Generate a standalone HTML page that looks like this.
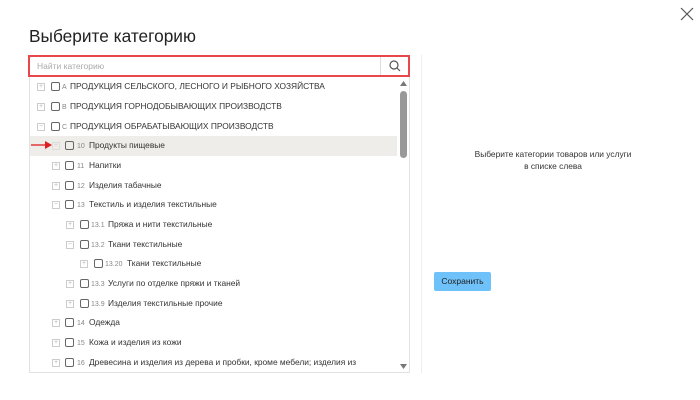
<!DOCTYPE html>
<html><head><meta charset="utf-8"><style>
*{margin:0;padding:0;box-sizing:border-box}
body{width:700px;height:400px;background:#fff;font-family:"Liberation Sans",sans-serif;position:relative;overflow:hidden;color:#333}
.abs{position:absolute}
h1{position:absolute;left:29px;top:26px;font-size:17.3px;font-weight:normal;color:#222}
.search{left:28px;top:55px;width:382px;height:22px;border:2px solid #e8474c}
.search span{position:absolute;left:7px;top:4px;font-size:8.5px;color:#aaa}
.search .btn{position:absolute;right:0;top:0;width:28px;height:18px;border-left:1px solid #ddd}
.tree{left:29px;top:77px;width:381px;height:296px;border:1px solid #e2e2e2;border-top:none}
.row{position:absolute;height:19px;font-size:8.4px;line-height:19px;white-space:nowrap}
.ex{position:absolute;width:8px;height:8px;border:1px solid #ccc;top:6px;font-size:7px;line-height:6px;text-align:center;color:#bbb}
.cb{position:absolute;width:9px;height:9px;border:1px solid #666;border-radius:2px;top:5px}
.code{position:absolute;color:#888;font-size:7px;top:1px}
.txt{position:absolute;color:#333}
.hl{left:30px;top:136px;width:367px;height:20px;background:#efede9}
.sb{left:400px;top:91px;width:7px;height:67px;background:#999;border-radius:4px}
.div{left:421px;top:55px;width:1px;height:318px;background:#eee}
.rt{left:440px;top:148px;width:226px;text-align:center;font-size:8.4px;line-height:12px;color:#333}
.save{left:434px;top:272px;width:57px;height:19px;background:#6fc1f9;border-radius:2px;font-size:8.5px;line-height:19px;text-align:center;color:#222}
#r{position:absolute;left:0;top:0.5px}
</style></head><body>
<h1>Выберите категорию</h1>
<div class="abs search"><span>Найти категорию</span><div class="btn"><svg width="28" height="18"><circle cx="13" cy="8" r="4" fill="none" stroke="#555" stroke-width="1.2"/><line x1="16" y1="11" x2="19" y2="14" stroke="#555" stroke-width="1.2"/></svg></div></div>
<div class="abs tree"></div>
<div class="abs hl"></div>
<div class="abs div"></div>
<svg class="abs" style="left:398px;top:79px" width="11" height="292"><polygon points="2,7 9,7 5.5,2" fill="#777"/><polygon points="2,285 9,285 5.5,290" fill="#777"/></svg>
<div class="abs sb"></div>
<svg class="abs" style="left:31px;top:141px" width="22" height="8"><line x1="0" y1="4" x2="16" y2="4" stroke="#e02020" stroke-width="1.3"/><polygon points="14,0 21,4 14,8" fill="#e02020"/></svg>
<div class="abs rt">Выберите категории товаров или услуги<br>в списке слева</div>
<div class="abs save">Сохранить</div>
<svg class="abs" style="left:680px;top:7px" width="14" height="14"><path d="M1 1L13 13M13 1L1 13" stroke="#555" stroke-width="1.2"/></svg>
<div id="r">
<div class="row" style="top:76px;left:0"><div class="ex" style="left:37px">+</div><div class="cb" style="left:51px"></div><span class="code" style="left:62px">A</span><span class="txt" style="left:70px">ПРОДУКЦИЯ СЕЛЬСКОГО, ЛЕСНОГО И РЫБНОГО ХОЗЯЙСТВА</span></div>
<div class="row" style="top:96px;left:0"><div class="ex" style="left:37px">+</div><div class="cb" style="left:51px"></div><span class="code" style="left:62px">B</span><span class="txt" style="left:70px">ПРОДУКЦИЯ ГОРНОДОБЫВАЮЩИХ ПРОИЗВОДСТВ</span></div>
<div class="row" style="top:116px;left:0"><div class="ex" style="left:37px">−</div><div class="cb" style="left:51px"></div><span class="code" style="left:62px">C</span><span class="txt" style="left:70px">ПРОДУКЦИЯ ОБРАБАТЫВАЮЩИХ ПРОИЗВОДСТВ</span></div>
<div class="row" style="top:135px;left:0"><div class="ex" style="left:52px;opacity:.5">+</div><div class="cb" style="left:65px"></div><span class="code" style="left:77px">10</span><span class="txt" style="left:89px">Продукты пищевые</span></div>
<div class="row" style="top:155px;left:0"><div class="ex" style="left:52px">+</div><div class="cb" style="left:65px"></div><span class="code" style="left:77px">11</span><span class="txt" style="left:89px">Напитки</span></div>
<div class="row" style="top:175px;left:0"><div class="ex" style="left:52px">+</div><div class="cb" style="left:65px"></div><span class="code" style="left:77px">12</span><span class="txt" style="left:89px">Изделия табачные</span></div>
<div class="row" style="top:194px;left:0"><div class="ex" style="left:52px">−</div><div class="cb" style="left:65px"></div><span class="code" style="left:77px">13</span><span class="txt" style="left:89px">Текстиль и изделия текстильные</span></div>
<div class="row" style="top:214px;left:0"><div class="ex" style="left:66px">+</div><div class="cb" style="left:80px"></div><span class="code" style="left:91px">13.1</span><span class="txt" style="left:108px">Пряжа и нити текстильные</span></div>
<div class="row" style="top:234px;left:0"><div class="ex" style="left:66px">−</div><div class="cb" style="left:80px"></div><span class="code" style="left:91px">13.2</span><span class="txt" style="left:108px">Ткани текстильные</span></div>
<div class="row" style="top:253px;left:0"><div class="ex" style="left:80px">+</div><div class="cb" style="left:94px"></div><span class="code" style="left:105px">13.20</span><span class="txt" style="left:127px">Ткани текстильные</span></div>
<div class="row" style="top:273px;left:0"><div class="ex" style="left:66px">+</div><div class="cb" style="left:80px"></div><span class="code" style="left:91px">13.3</span><span class="txt" style="left:108px">Услуги по отделке пряжи и тканей</span></div>
<div class="row" style="top:293px;left:0"><div class="ex" style="left:66px">+</div><div class="cb" style="left:80px"></div><span class="code" style="left:91px">13.9</span><span class="txt" style="left:108px">Изделия текстильные прочие</span></div>
<div class="row" style="top:312px;left:0"><div class="ex" style="left:52px">+</div><div class="cb" style="left:65px"></div><span class="code" style="left:77px">14</span><span class="txt" style="left:89px">Одежда</span></div>
<div class="row" style="top:332px;left:0"><div class="ex" style="left:52px">+</div><div class="cb" style="left:65px"></div><span class="code" style="left:77px">15</span><span class="txt" style="left:89px">Кожа и изделия из кожи</span></div>
<div class="row" style="top:352px;left:0"><div class="ex" style="left:52px">+</div><div class="cb" style="left:65px"></div><span class="code" style="left:77px">16</span><span class="txt" style="left:89px">Древесина и изделия из дерева и пробки, кроме мебели; изделия из</span></div>
</div>
</body></html>
